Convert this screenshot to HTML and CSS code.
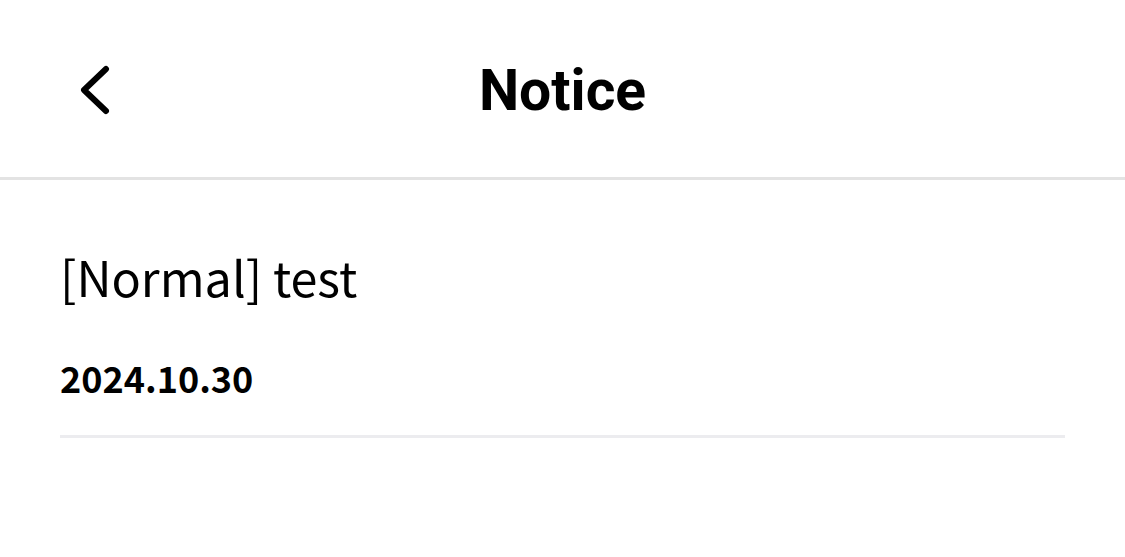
FILE: index.html
```html
<!DOCTYPE html>
<html lang="en">
<head>
<meta charset="utf-8">
<title>Notice</title>
<link rel="stylesheet" href="styles.css">
</head>
<body>
<header class="topbar">
  <button class="back" aria-label="Back">
    <svg viewBox="0 0 40 50" width="40" height="50"><path d="M34 4 L12 25 L34 46" fill="none" stroke="#000" stroke-width="6" stroke-linecap="round" stroke-linejoin="round"/></svg>
  </button>
  <h1 class="title">Notice</h1>
</header>
<main class="list">
  <article class="item">
    <h2 class="item-title">[Normal] test</h2>
    <p class="item-date">2024.10.30</p>
  </article>
</main>
</body>
</html>
```
FILE: styles.css
```css
html, body {
  margin: 0;
  padding: 0;
  background: #fff;
  color: #000;
}
body {
  font-family: "Noto Sans CJK KR", "Noto Sans", sans-serif;
}
.topbar {
  position: relative;
  height: 177px;
  border-bottom: 3px solid #e3e3e3;
  display: flex;
  align-items: center;
  justify-content: center;
}
.back {
  position: absolute;
  left: 72px;
  top: 65px;
  width: 40px;
  height: 50px;
  padding: 0;
  border: 0;
  background: none;
}
.back svg { display: block; }
.title {
  margin: 0;
  padding-top: 4px;
  font-family: Roboto, "Liberation Sans", sans-serif;
  font-weight: 700;
  font-size: 57px;
  line-height: 64px;
}
.list {
  padding: 0 60px;
}
.item {
  padding: 61px 0 32px;
  border-bottom: 3px solid #ececef;
}
.item-title {
  margin: 0;
  font-weight: 400;
  font-size: 48.5px;
  line-height: 70px;
}
.item-date {
  margin: 40px 0 0;
  font-weight: 700;
  font-size: 36px;
  line-height: 52px;
}
```
